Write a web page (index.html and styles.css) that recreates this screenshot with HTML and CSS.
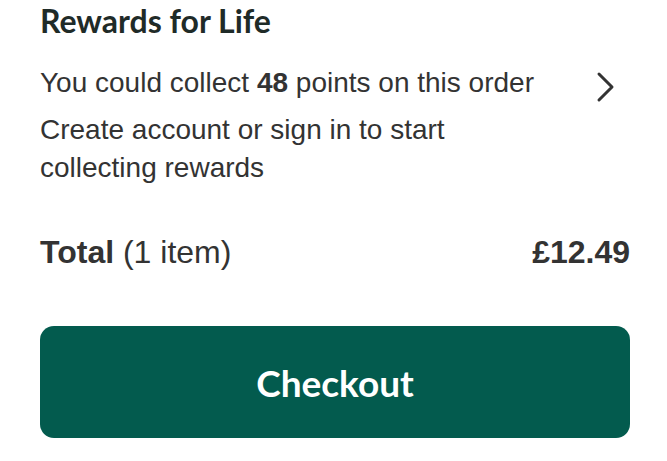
FILE: index.html
```html
<!DOCTYPE html>
<html lang="en">
<head>
    <meta charset="UTF-8">
    <meta name="viewport" content="width=device-width, initial-scale=1.0">
    <title>Basket summary</title>
    <link rel="stylesheet" href="styles.css">
</head>
<body>
    <div class="summary">
        <div class="rewards">
            <h2 class="rewards-title">Rewards for Life</h2>
            <a class="rewards-row" href="#">
                <span>You could collect <strong>48</strong> points on this order</span>
                <svg class="chevron" width="19" height="32" viewBox="0 0 19 32" aria-hidden="true">
                    <path d="M3 3 L16 16 L3 29" fill="none" stroke="#333" stroke-width="3" stroke-linecap="round" stroke-linejoin="round"/>
                </svg>
            </a>
            <p class="rewards-note">Create account or sign in to start collecting rewards</p>
        </div>

        <div class="total-row">
            <div class="total-label"><strong>Total</strong> (1 item)</div>
            <div class="total-price">£12.49</div>
        </div>

        <button class="checkout-btn">Checkout</button>
    </div>
</body>
</html>
```

FILE: styles.css
```css
body {
    margin: 0;
    padding: 0;
    font-family: "Liberation Sans", Arial, sans-serif;
    background-color: #fff;
    color: #333;
}

.summary {
    padding: 0 37px 0 40px;
}

.rewards-title {
    font-family: Lato, "Open Sans", sans-serif;
    font-weight: 700;
    font-size: 32px;
    line-height: 40px;
    color: #1f2b28;
    margin: 0;
    padding-top: 1px;
}

.rewards-row {
    display: flex;
    justify-content: space-between;
    align-items: flex-start;
    margin-top: 23px;
    color: #333;
    text-decoration: none;
    font-size: 28px;
    line-height: 38px;
}

.chevron {
    margin-top: 7px;
    margin-right: 15px;
}

.rewards-note {
    margin: 8px 0 0;
    max-width: 470px;
    font-size: 28px;
    line-height: 38px;
}

.total-row {
    display: flex;
    justify-content: space-between;
    align-items: baseline;
    margin-top: 45px;
    font-size: 32px;
    line-height: 40px;
}

.total-price {
    font-weight: bold;
}

.checkout-btn {
    display: block;
    width: 100%;
    height: 112px;
    margin-top: 54px;
    padding-top: 2px;
    background-color: #035b4e;
    color: #fff;
    border: none;
    border-radius: 14px;
    font-family: Lato, "Open Sans", sans-serif;
    font-weight: 700;
    font-size: 37px;
    cursor: pointer;
}
```
